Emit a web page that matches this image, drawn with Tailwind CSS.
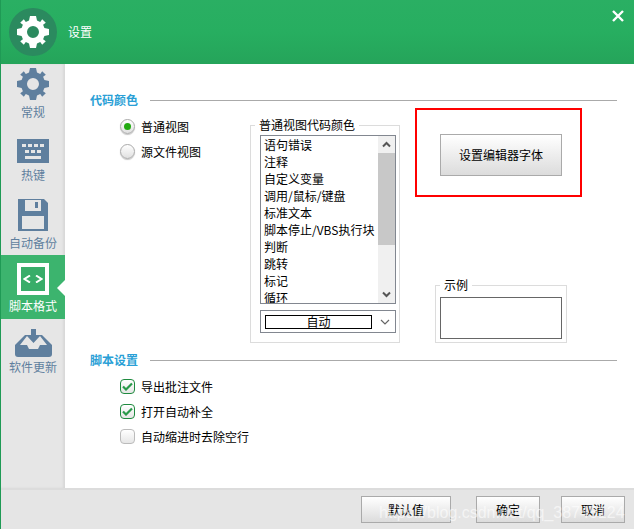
<!DOCTYPE html>
<html lang="zh-CN">
<head>
  <meta charset="UTF-8" />
  <title>设置</title>
  <script src="https://cdn.jsdelivr.net/npm/@tailwindcss/browser@4"></script>
</head>
<body class="w-[634px] h-[529px] overflow-hidden bg-white text-[12px] leading-none text-black font-['Noto_Sans_CJK_SC','Noto_Sans',sans-serif]">
  <div class="relative flex h-full flex-col border-l border-[#1f9a55]">
    <!-- Header -->
    <header class="flex h-16 shrink-0 items-center bg-gradient-to-b from-[#2aaf63] via-[#27ae60] to-[#25a45a]">
      <div class="ml-2 flex h-12 w-12 items-center justify-center rounded-full bg-[#2b8a5f]">
        <svg class="h-8 w-8 text-white" viewBox="0 0 32 32"><use href="#gear"/></svg>
      </div>
      <span class="ml-[11px] text-white">设置</span>
      <svg class="ml-auto mr-[10px] mb-[33px] h-3 w-3" viewBox="0 0 12 12" fill="none" stroke="white" stroke-width="2.4"><path d="M1 1l10 10M11 1L1 11"/></svg>
    </header>

    <div class="flex min-h-0 flex-1">
      <!-- Sidebar -->
      <nav class="flex w-16 shrink-0 flex-col bg-[#e6e6e6] text-[#5f7f9e] shadow-[inset_-2px_0_2px_#d8d8d8]">
        <a class="flex h-[63px] flex-col items-center pt-1">
          <svg class="h-8 w-8" viewBox="0 0 32 32"><use href="#gear"/></svg>
          <span class="mt-[6px]">常规</span>
        </a>
        <a class="flex h-[64px] flex-col items-center pt-3">
          <svg class="h-[25px] w-8" viewBox="0 0 32 25" fill="currentColor">
            <path fill-rule="evenodd" d="M0 0h32v24H0zM5 5v3h4V5zM11 5v3h4V5zM17 5v3h4V5zM23 5v3h4V5zM8 11v3h4v-3zM14 11v3h4v-3zM20 11v3h4v-3zM8 17v3h16v-3z"/>
          </svg>
          <span class="mt-[5px]">热键</span>
        </a>
        <a class="flex h-[64px] flex-col items-center pt-2">
          <svg class="h-[33px] w-[30px]" viewBox="0 0 30 33" fill="currentColor">
            <path fill-rule="evenodd" d="M0 0h26l4 4v28H0zM4 17v13h22V17zM7 1v11h16V1zM17 3h3v6h-3z"/>
          </svg>
          <span class="mt-[5px]">自动备份</span>
        </a>
        <a class="relative flex h-[64px] flex-col items-center bg-[#3cb46e] pt-2 text-white">
          <span class="flex h-8 w-8 items-center justify-center border-[4px] border-white bg-[#38ad69]">
            <svg class="h-2 w-5" viewBox="0 0 20 8" fill="none" stroke="white" stroke-width="2"><path d="M7 .5L1.500 4 7 7.500M13 .5L18.500 4 13 7.500"/></svg>
          </span>
          <span class="mt-[5px]">脚本格式</span>
          <span class="absolute right-0 top-[25px] h-0 w-0 border-y-[8px] border-r-[8px] border-y-transparent border-r-white"></span>
        </a>
        <a class="flex h-[64px] flex-col items-center pt-[10px]">
          <svg class="h-7 w-[37px]" viewBox="0 0 37 28" fill="currentColor">
            <path d="M10 6H27L37 16V25a3 3 0 0 1-3 3H3a3 3 0 0 1-3-3V16Z"/>
            <path fill="#e6e6e6" d="M5 16L12 7H25L32 16H25L23 20H14L12 16Z"/>
            <path d="M16 0h5v7h4l-6.500 7-6.500-7h4z"/>
          </svg>
          <span class="mt-[4px]">软件更新</span>
        </a>
      </nav>

      <!-- Content -->
      <main class="flex min-w-0 flex-1 flex-col pt-7">
        <div class="flex h-4 items-center pl-[25px] pr-[17px]">
          <span class="font-bold text-[#2a9fd6]">代码颜色</span>
          <span class="ml-[12px] h-px flex-1 bg-[#aaaaaa]"></span>
        </div>

        <div class="flex h-[235px]">
          <div class="flex w-[185px] flex-col gap-[10px] pl-[55px] pt-[11px]">
            <label class="flex h-[15px] items-center gap-[6px]">
              <span class="flex h-[15px] w-[15px] items-center justify-center rounded-full border border-[#aaaaaa] bg-gradient-to-b from-white to-[#e0e0e0] shadow-[0_1px_1px_#c4c4c4]">
                <span class="h-[7px] w-[7px] rounded-full bg-[#22aa11]"></span>
              </span>
              普通视图
            </label>
            <label class="flex h-[15px] items-center gap-[6px]">
              <span class="h-[15px] w-[15px] rounded-full border border-[#aaaaaa] bg-gradient-to-b from-white to-[#e0e0e0] shadow-[0_1px_1px_#c4c4c4]"></span>
              源文件视图
            </label>
          </div>

          <div class="relative mt-[17px] h-[218px] w-[150px] border border-[#dcdcdc] px-[9px] pt-[9px]">
            <span class="absolute left-[4px] top-[-7px] bg-white px-[4px]">普通视图代码颜色</span>
            <div class="flex h-[169px] w-[136px] border border-[#828790]">
              <ul class="flex-1 overflow-hidden pl-[3px] leading-[17px]">
                <li>语句错误</li>
                <li>注释</li>
                <li>自定义变量</li>
                <li>调用/鼠标/键盘</li>
                <li>标准文本</li>
                <li class="whitespace-nowrap">脚本停止/VBS执行块</li>
                <li>判断</li>
                <li>跳转</li>
                <li>标记</li>
                <li>循环</li>
              </ul>
              <div class="flex w-[17px] flex-col bg-[#f0f0f0]">
                <svg class="h-[17px] w-[17px]" viewBox="0 0 17 17" fill="none" stroke="#555555" stroke-width="2"><path d="M5 10.500l3.500-3.500 3.500 3.500"/></svg>
                <div class="h-[92px] bg-[#c8c8c8]"></div>
                <svg class="mt-auto h-[17px] w-[17px]" viewBox="0 0 17 17" fill="none" stroke="#555555" stroke-width="2"><path d="M5 6.500l3.500 3.500 3.500-3.500"/></svg>
              </div>
            </div>
            <div class="mt-[6px] flex h-[23px] w-[136px] items-center border border-[#828790] pl-1">
              <span class="flex h-[14px] w-[107px] items-center justify-center border border-black">自动</span>
              <svg class="ml-[8px] h-[8px] w-[10px]" viewBox="0 0 10 8" fill="none" stroke="#666666" stroke-width="1.200"><path d="M1 2l4 4 4-4"/></svg>
            </div>
          </div>

          <div class="ml-[15px] flex flex-col">
            <div class="h-[89px] w-[167px] border-2 border-[#ff0000] pl-[23px] pt-[24px]">
              <button class="h-[42px] w-[122px] border border-[#aaaaaa] bg-gradient-to-b from-white to-[#dcdcdc]">设置编辑器字体</button>
            </div>
            <div class="relative ml-[20px] mt-[88px] h-[58px] w-[132px] border border-[#dcdcdc] p-1">
              <span class="absolute left-[4px] top-[-7px] bg-white px-[4px]">示例</span>
              <div class="mt-[7px] h-[42px] w-[122px] border border-[#666666]"></div>
            </div>
          </div>
        </div>

        <div class="mt-[9px] flex h-4 items-center pl-[25px] pr-[17px]">
          <span class="font-bold text-[#2a9fd6]">脚本设置</span>
          <span class="ml-[12px] h-px flex-1 bg-[#aaaaaa]"></span>
        </div>

        <div class="flex flex-col gap-[10px] pl-[55px] pt-[11px]">
          <label class="flex h-[15px] items-center gap-[6px]">
            <span class="flex h-[15px] w-[15px] items-center justify-center rounded-sm border border-[#1f8a3f] bg-gradient-to-b from-white to-[#e6e6e6]">
              <svg class="h-[9px] w-[11px]" viewBox="0 0 11 9" fill="none" stroke="#2a9a4a" stroke-width="2.200"><path d="M1 4.500l3 3 6-6"/></svg>
            </span>
            导出批注文件
          </label>
          <label class="flex h-[15px] items-center gap-[6px]">
            <span class="flex h-[15px] w-[15px] items-center justify-center rounded-sm border border-[#1f8a3f] bg-gradient-to-b from-white to-[#e6e6e6]">
              <svg class="h-[9px] w-[11px]" viewBox="0 0 11 9" fill="none" stroke="#2a9a4a" stroke-width="2.200"><path d="M1 4.500l3 3 6-6"/></svg>
            </span>
            打开自动补全
          </label>
          <label class="flex h-[15px] items-center gap-[6px]">
            <span class="h-[15px] w-[15px] rounded-sm border border-[#bbbbbb] bg-gradient-to-b from-white to-[#e6e6e6]"></span>
            自动缩进时去除空行
          </label>
        </div>
      </main>
    </div>

    <!-- Footer -->
    <footer class="relative flex h-[41px] shrink-0 items-start justify-end gap-[21px] border-t-2 border-[#dcdcdc] bg-[#e5e5e5] pr-[9px] pt-[6px]">
      <button class="mr-[4px] h-[27px] w-[90px] border border-[#aaaaaa] bg-gradient-to-b from-white to-[#dcdcdc]">默认值</button>
      <button class="h-[27px] w-[64px] border border-[#aaaaaa] bg-gradient-to-b from-white to-[#dcdcdc]">确定</button>
      <button class="h-[27px] w-[64px] border border-[#aaaaaa] bg-gradient-to-b from-white to-[#dcdcdc]">取消</button>
      <span class="absolute left-[378px] top-[15px] whitespace-nowrap text-[16px] text-white/60 font-['Liberation_Sans',sans-serif]">https://blog.csdn.net/qq_38745124</span>
    </footer>
  </div>

  <svg class="hidden">
    <symbol id="gear" viewBox="0 0 32 32">
      <path fill="currentColor" fill-rule="evenodd" d="M13 0H19L20 4.600L23.200 5.900L25.200 3.200L28.800 6.800L26.100 8.800L27.400 12L32 13V19L27.400 20L26.100 23.200L28.800 25.200L25.200 28.800L23.200 26.100L20 27.400L19 32H13L12 27.400L8.800 26.100L6.800 28.800L3.200 25.200L5.900 23.200L4.600 20L0 19V13L4.600 12L5.900 8.800L3.200 6.800L6.800 3.200L8.800 5.900L12 4.600ZM16 10a6 6 0 1 0 0 12 6 6 0 0 0 0-12Z"/>
    </symbol>
  </svg>
</body>
</html>
